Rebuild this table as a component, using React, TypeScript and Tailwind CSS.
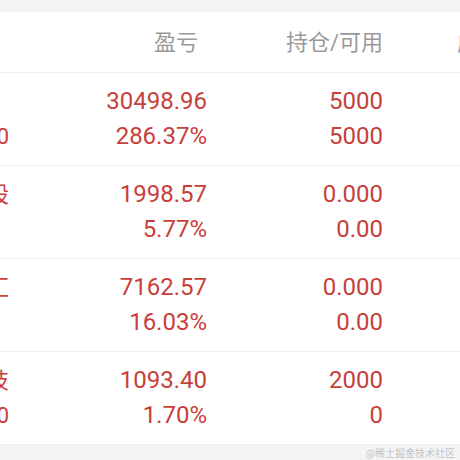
import React from "react";

const rows = [
  { name: ["", "600000"], pnl: ["30498.96", "286.37%"], pos: ["5000", "5000"], cost: ["1.762", "6.862"] },
  { name: ["A股", ""], pnl: ["1998.57", "5.77%"], pos: ["0.000", "0.00"], cost: ["0.000", "0.000"] },
  { name: ["外汇", ""], pnl: ["7162.57", "16.03%"], pos: ["0.000", "0.00"], cost: ["0.000", "0.000"] },
  { name: ["科技", "300000"], pnl: ["1093.40", "1.70%"], pos: ["2000", "0"], cost: ["32.160", "32.707"] },
];

const Cell = ({ lines, className }: { lines: string[]; className: string }) => (
  <div className={`shrink-0 flex flex-col ${className}`}>
    {lines.map((t, i) => (
      <div key={i} className="h-[35px] leading-[35px] whitespace-nowrap">
        {t}
      </div>
    ))}
  </div>
);

export default function App() {
  return (
    <div className="w-[460px] h-[460px] overflow-hidden bg-white flex flex-col font-['Roboto','Noto_Sans_CJK_SC',sans-serif]">
      <div className="h-[12px] shrink-0 bg-[#f4f4f4]" />

      {/* header */}
      <div className="h-[61px] shrink-0 flex items-center border-b border-[#eeeeee] text-[22px] text-[#999999]">
        <div className="w-[9px] shrink-0" />
        <div className="w-[198px] shrink-0 text-right pr-[9px]">盈亏</div>
        <div className="w-[176px] shrink-0 text-right">持仓/可用</div>
        <div className="shrink-0 pl-[74px] whitespace-nowrap">成本/现价</div>
      </div>

      {rows.map((r, i) => (
        <div key={i} className="shrink-0 flex py-[11px] border-b border-[#eeeeee] text-[24px] text-[#c7403a]">
          <div className="w-[9px] shrink-0 overflow-hidden flex flex-col items-end text-[22px]">
            {r.name.map((t, j) => (
              <div key={j} className="h-[35px] leading-[35px] whitespace-nowrap flex justify-end w-[9px]">
                {t}
              </div>
            ))}
          </div>
          <Cell lines={r.pnl} className="w-[198px] items-end" />
          <Cell lines={r.pos} className="w-[176px] items-end" />
          <Cell lines={r.cost} className="w-[170px] items-end" />
        </div>
      ))}

      <div className="flex-1 bg-[#f4f4f4] flex items-center justify-end pr-[5px] text-[10px] text-[#c4c4c4] font-['Noto_Sans_CJK_SC',sans-serif]">
        @稀土掘金技术社区
      </div>
    </div>
  );
}
